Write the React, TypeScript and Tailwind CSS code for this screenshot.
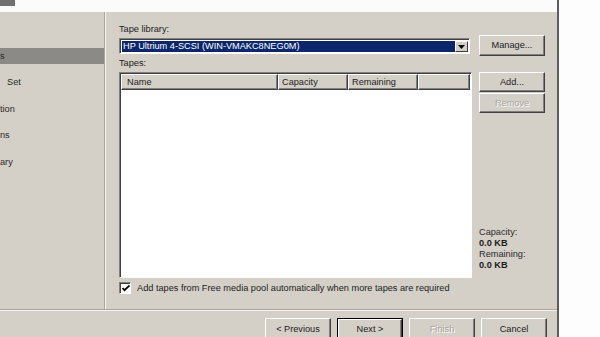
import React from "react";

const font = { fontFamily: '"Liberation Sans", Arial, sans-serif' };

const navItems = [
  { label: "s", pl: "pl-0", selected: true },
  { label: "Set", pl: "pl-[7px]", selected: false },
  { label: "tion", pl: "pl-0", selected: false },
  { label: "ns", pl: "pl-0", selected: false },
  { label: "ary", pl: "pl-0", selected: false },
];

type BtnProps = {
  label: string;
  disabled?: boolean;
  isDefault?: boolean;
  className?: string;
};

const WinButton = ({ label, disabled, isDefault, className }: BtnProps) => {
  const inner = (
    <div
      className={`flex h-full w-full items-center justify-center border border-t-white border-l-white border-r-[#404040] border-b-[#404040] bg-[#d4d0c8] shadow-[inset_-1px_-1px_#808080] ${
        disabled ? "text-[#a7a49e] [text-shadow:1px_1px_#ffffff]" : "text-[#1c1c1c]"
      }`}
    >
      {label}
    </div>
  );
  if (isDefault) {
    return <div className={`border border-black ${className}`}>{inner}</div>;
  }
  return <div className={className}>{inner}</div>;
};

export default function App() {
  return (
    <div
      className="flex h-[337px] w-[600px] overflow-hidden bg-[#fdfdfd] text-[9.2px] leading-[11px] text-[#1c1c1c]"
      style={font}
    >
      <div className="flex w-[559px] shrink-0 flex-col border-r-2 border-[#5c5c5c]">
        {/* banner */}
        <div className="h-[12px] shrink-0 bg-[#fbfbfb]">
          <div className="h-[6px] w-[15px] bg-[#707070]" />
        </div>

        {/* body */}
        <div className="flex h-[297px] shrink-0 bg-[#d4d0c8]">
          <div className="flex w-[104px] flex-col gap-[10.5px] pt-[36px] text-[#2a2a2a]">
            {navItems.map((it) => (
              <div
                key={it.label}
                className={`flex h-[16px] items-center ${it.pl} ${it.selected ? "bg-[#8b8a86]" : ""}`}
              >
                {it.label}
              </div>
            ))}
          </div>
          <div className="w-px bg-[#a9a69f]" />
          <div className="w-px bg-[#f4f3ef]" />

          <div className="flex pl-[13px] pt-[12px]">
            <div className="flex w-[353px] flex-col">
              <div>Tape library:</div>
              <div className="mt-[3px] flex h-[16px] w-[351px] border border-t-[#808080] border-l-[#808080] border-r-white border-b-white">
                <div className="flex flex-1 border-t border-l border-t-[#404040] border-l-[#404040] bg-white p-px">
                  <div className="flex flex-1 items-center bg-[#0b266b] pl-px text-white">
                    HP Ultrium 4-SCSI (WIN-VMAKC8NEG0M)
                  </div>
                  <div className="flex w-[13px] items-center justify-center border border-t-white border-l-white border-r-[#404040] border-b-[#404040] bg-[#d4d0c8]">
                    <svg width="7" height="4" viewBox="0 0 7 4">
                      <path d="M0 0h7L3.5 4z" fill="#000" />
                    </svg>
                  </div>
                </div>
              </div>
              <div className="mt-[4px]">Tapes:</div>
              <div className="mt-[3px] flex h-[206px] flex-col border border-t-[#808080] border-l-[#808080] border-r-white border-b-white">
                <div className="flex flex-1 flex-col border-t border-l border-t-[#404040] border-l-[#404040] bg-white">
                  <div className="flex h-[16px] shrink-0">
                    <div className="flex w-[157px] items-center border border-t-white border-l-white border-r-[#404040] border-b-[#404040] bg-[#d4d0c8] pl-[5px] shadow-[inset_-1px_-1px_#808080]">
                      Name
                    </div>
                    <div className="flex w-[70px] items-center border border-t-white border-l-white border-r-[#404040] border-b-[#404040] bg-[#d4d0c8] pl-[3px] shadow-[inset_-1px_-1px_#808080]">
                      Capacity
                    </div>
                    <div className="flex w-[70px] items-center border border-t-white border-l-white border-r-[#404040] border-b-[#404040] bg-[#d4d0c8] pl-[3px] shadow-[inset_-1px_-1px_#808080]">
                      Remaining
                    </div>
                    <div className="flex w-[52px] border border-t-white border-l-white border-r-[#404040] border-b-[#404040] bg-[#d4d0c8] shadow-[inset_-1px_-1px_#808080]" />
                  </div>
                  <div className="flex-1 bg-white" />
                </div>
              </div>
              <div className="mt-[4px] flex h-[12px] items-center">
                <div className="flex h-[12px] w-[12px] border border-t-[#808080] border-l-[#808080] border-r-white border-b-white">
                  <div className="flex flex-1 items-center justify-center border-t border-l border-t-[#404040] border-l-[#404040] bg-white">
                    <svg width="8" height="7" viewBox="0 0 8 7">
                      <path d="M0.5 3l2 2.2L7.5 0.5" stroke="#000" strokeWidth="1.8" fill="none" />
                    </svg>
                  </div>
                </div>
                <span className="ml-[6px]">
                  Add tapes from Free media pool automatically when more tapes are required
                </span>
              </div>
            </div>

            <div className="ml-[7px] flex w-[66px] flex-col">
              <WinButton label="Manage..." className="mt-[11px] h-[21px]" />
              <WinButton label="Add..." className="mt-[16px] h-[20px]" />
              <WinButton label="Remove" disabled className="mt-px h-[20px]" />
              <div className="mt-[114px] text-[#2a2a2a]">Capacity:</div>
              <div className="font-bold">0.0 KB</div>
              <div className="text-[#2a2a2a]">Remaining:</div>
              <div className="font-bold">0.0 KB</div>
            </div>
          </div>
        </div>

        {/* separator */}
        <div className="h-px shrink-0 bg-[#a9a69f]" />
        <div className="h-px shrink-0 bg-[#f4f3ef]" />

        {/* footer */}
        <div className="flex flex-1 justify-end gap-[6px] bg-[#d4d0c8] pr-[10px] pt-[7px]">
          <WinButton label="< Previous" className="h-[22px] w-[66px]" />
          <WinButton label="Next >" isDefault className="h-[22px] w-[66px]" />
          <WinButton label="Finish" disabled className="h-[22px] w-[66px]" />
          <WinButton label="Cancel" className="h-[22px] w-[66px]" />
        </div>
      </div>
      <div className="flex-1 bg-[#fdfdfd]" />
    </div>
  );
}
